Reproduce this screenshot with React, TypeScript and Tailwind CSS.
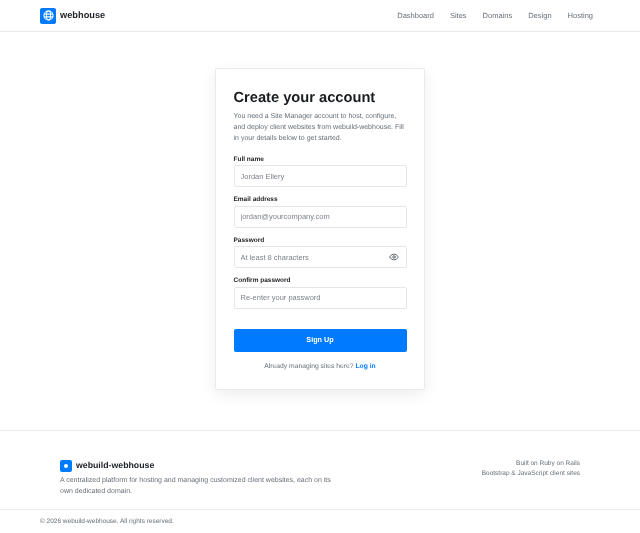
import { Eye } from "lucide-react";

const navLinks = ["Dashboard", "Sites", "Domains", "Design", "Hosting"];

function Field({ label, placeholder, icon }: { label: string; placeholder: string; icon?: boolean }) {
  return (
    <div className="mb-[8px]">
      <label className="block text-[6.5px] leading-[10px] font-bold text-[#212529] mb-[0.5px] pt-[0.5px] -mt-[0.5px]">{label}</label>
      <div className="relative">
        <input
          type="text"
          placeholder={placeholder}
          className="block w-full h-[22px] px-[6px] text-[7.5px] rounded-[2px] border border-[#e4e6e9] bg-transparent placeholder:text-[#7d838a] outline-none"
        />
        {icon && <Eye className="absolute right-[7.5px] top-[6px] w-[10px] h-[10px] text-[#5f666d]" strokeWidth={2.25} />}
      </div>
    </div>
  );
}

export default function App() {
  return (
    <div className="min-h-[533px] font-['Liberation_Sans',Arial,sans-serif] text-[#1a1d20] [text-rendering:geometricPrecision] blur-[0.4px]">
      <header className="h-[32px] border-b border-[#e8eaed] px-[40px] flex items-center justify-between">
        <div className="flex items-center gap-[4px]">
          <div className="w-[16px] h-[16px] rounded-[2px] bg-[#007bff] flex items-center justify-center">
            <svg viewBox="0 0 24 24" className="w-[11px] h-[11px]" fill="none" stroke="white" strokeWidth="2.25">
              <circle cx="12" cy="12" r="10" />
              <ellipse cx="12" cy="12" rx="4.5" ry="10" />
              <path d="M2.5 9h19M2.5 15h19" />
            </svg>
          </div>
          <span className="text-[9.25px] font-bold text-[#212529]">webhouse</span>
        </div>
        <nav className="flex items-center gap-[16px] mr-[7px] pt-[0.5px]">
          {navLinks.map((link) => (
            <a key={link} className="text-[7.5px] text-[#666e76]">{link}</a>
          ))}
        </nav>
      </header>

      <main className="h-[398px] pt-[36px] flex justify-center">
        <div className="w-[210px] h-[322px] border border-[#e8eaed] rounded-[2px] shadow-[0_5px_16px_rgba(0,0,0,0.07)] px-[17.5px] pt-[20px]">
          <h1 className="text-[14.67px] leading-[19px] font-bold text-[#1a1d20]">Create your account</h1>
          <p className="mt-[2.5px] text-[7px] leading-[11.2px] text-[#666e76] mb-[10.5px]">
            You need a Site Manager account to host, configure, and deploy client websites from webuild-webhouse. Fill in your details below to get started.
          </p>
          <Field label="Full name" placeholder="Jordan Ellery" />
          <Field label="Email address" placeholder="jordan@yourcompany.com" />
          <Field label="Password" placeholder="At least 8 characters" icon />
          <Field label="Confirm password" placeholder="Re-enter your password" />
          <button className="mt-[12.5px] w-full h-[23px] rounded-[2px] bg-[#007bff] text-white text-[7.25px] font-bold">Sign Up</button>
          <p className="mt-[10px] text-center text-[6.75px] leading-[10px] text-[#666e76]">
            Already managing sites here? <a className="font-bold text-[#007bff]">Log in</a>
          </p>
        </div>
      </main>

      <footer className="border-t border-[#e8eaed]">
        <div className="h-[78px] px-[60px] pt-[28px] flex justify-between">
          <div className="w-[280px]">
            <div className="flex items-center gap-[4px]">
              <div className="w-[12px] h-[12px] rounded-[2px] bg-[#007bff] flex items-center justify-center">
                <div className="w-[4px] h-[4px] rounded-full bg-white" />
              </div>
              <span className="text-[8.75px] font-bold text-[#212529]">webuild-webhouse</span>
            </div>
            <p className="mt-[3px] text-[7px] leading-[11.2px] text-[#666e76]">
              A centralized platform for hosting and managing customized client websites, each on its own dedicated domain.
            </p>
          </div>
          <div className="text-right text-[6.5px] leading-[9.5px] text-[#666e76]">
            <div>Built on Ruby on Rails</div>
            <div>Bootstrap &amp; JavaScript client sites</div>
          </div>
        </div>
        <div className="border-t border-[#e8eaed] px-[40px] pt-[7px] text-[6.5px] leading-[10px] text-[#666e76]">
          © 2026 webuild-webhouse. All rights reserved.
        </div>
      </footer>
    </div>
  );
}
